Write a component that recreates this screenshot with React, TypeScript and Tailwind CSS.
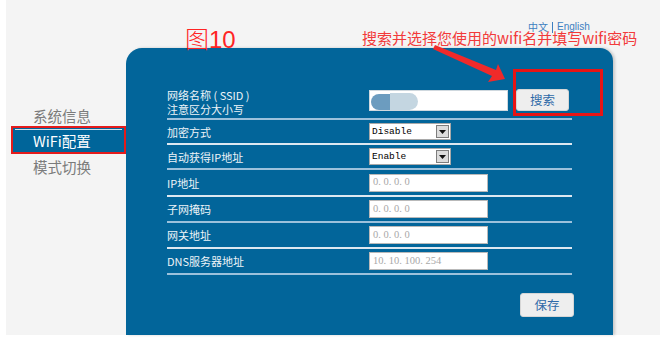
import React from "react";

const cjk = "font-['Noto_Sans_CJK_SC','Noto_Sans',sans-serif]";

type Row = {
  label: string[];
  kind: "ssid" | "select" | "text";
  value?: string;
  h: string;
  line: string;
};

const rows: Row[] = [
  { label: ["网络名称 ( SSID )", "注意区分大小写"], kind: "ssid", h: "h-[30px]", line: "bg-[#9cc1dc]" },
  { label: ["加密方式"], kind: "select", value: "Disable", h: "h-[23px]", line: "bg-[#dde8f1]" },
  { label: ["自动获得IP地址"], kind: "select", value: "Enable", h: "h-[23px]", line: "bg-[#9cc1dc]" },
  { label: ["IP地址"], kind: "text", value: "0. 0. 0. 0", h: "h-[25px]", line: "bg-[#dde8f1]" },
  { label: ["子网掩码"], kind: "text", value: "0. 0. 0. 0", h: "h-[24px]", line: "bg-[#9cc1dc]" },
  { label: ["网关地址"], kind: "text", value: "0. 0. 0. 0", h: "h-[24px]", line: "bg-[#dde8f1]" },
  { label: ["DNS服务器地址"], kind: "text", value: "10. 10. 100. 254", h: "h-[24px]", line: "bg-[#9cc1dc]" },
];

function SelectBox({ value }: { value: string }) {
  return (
    <div className="flex h-[17px] w-[82px] items-center justify-between border border-[#a9a9a9] bg-white pl-[2px] pr-[1px]">
      <span className="font-['Liberation_Mono',monospace] text-[9.5px] leading-none text-black">{value}</span>
      <div className="flex h-[13px] w-[13px] items-center justify-center border border-[#7d7d7d] bg-[#dcdcdc]">
        <svg width="7" height="4" viewBox="0 0 7 4">
          <polygon points="0,0 7,0 3.5,4" fill="#111" />
        </svg>
      </div>
    </div>
  );
}

function Field({ row }: { row: Row }) {
  if (row.kind === "ssid") {
    return (
      <div className="flex items-start pt-[2px]">
        <div className="relative h-[21px] w-[139px] overflow-hidden border border-[#cfd8de] bg-white">
          {/* blurred-out network name */}
          <div className="absolute left-[1px] top-[3px] h-[16px] w-[30px] rounded-l-full rounded-tr-[6px] bg-[#6c9cbf] blur-[0.7px]" />
          <div className="absolute left-[20px] top-[2px] h-[17px] w-[28px] rounded-r-[9px] bg-[#c4d6e1] blur-[0.7px]" />
        </div>
        <button className={`ml-[8px] mt-[-1px] h-[22px] w-[53px] rounded-[3px] border border-[#d6d6d6] bg-[#eeeeee] text-[12.5px] leading-none text-[#2f6aa8] ${cjk}`}>
          搜索
        </button>
      </div>
    );
  }
  if (row.kind === "select") return <SelectBox value={row.value!} />;
  return (
    <div className="flex h-[18px] w-[119px] items-center border border-[#b9b9b9] bg-white pl-[3px]">
      <span className="font-['Liberation_Serif',serif] text-[10.5px] leading-none text-[#a8a8a8]">{row.value}</span>
    </div>
  );
}

export default function App() {
  return (
    <div className={`relative h-[357px] w-[660px] overflow-hidden bg-white ${cjk}`}>
      <div className="ml-[6px] flex h-[335px] bg-[#f4f4f4]">
        {/* sidebar */}
        <div className="w-[120px] pt-[106px]">
          <div className="h-[20px] pl-[27px] text-[14.5px] leading-[20px] text-[#7b7b7b]">系统信息</div>
          <div className="ml-[5px] h-[28px] w-[115px] border-2 border-[#e41b1b] bg-[#00659a]">
            <div className="mx-[2px] mt-[1px] h-px bg-[#cfe0ec]" />
            <div className="pl-[20px] text-[14.5px] leading-[22px] text-white">WiFi配置</div>
          </div>
          <div className="h-[26px] pl-[27px] text-[14.5px] leading-[26px] text-[#7b7b7b]">模式切换</div>
        </div>

        {/* panel */}
        <div className="mt-[48px] w-[487px] rounded-tl-[16px] rounded-tr-[13px] bg-[#02659a] px-[41px] pt-[40px] shadow-[2px_0_3px_rgba(0,0,0,0.18)]">
          {rows.map((row, i) => (
            <div key={i}>
              <div className={`flex ${row.h} ${row.kind === "ssid" ? "items-start" : "items-center"}`}>
                <div className="w-[202px] text-[11px] leading-[14px] text-[#eef4f8]">
                  {row.label.map((l, j) => (
                    <div key={j}>{l}</div>
                  ))}
                </div>
                <Field row={row} />
              </div>
              <div className={`h-[2px] ${row.line}`} />
            </div>
          ))}
          <div className="mt-[18px] flex justify-end">
            <button className="mr-[-2px] h-[24px] w-[54px] rounded-[3px] border border-[#d6d6d6] bg-[#eeeeee] text-[12.5px] leading-none text-[#2f6aa8]">
              保存
            </button>
          </div>
        </div>
      </div>

      {/* annotations */}
      <div className="absolute left-[185px] top-[24px] text-[24px] leading-[28px] text-[#ff2424]">
        <span className="font-light">图</span>
        <span className="font-['Liberation_Sans',sans-serif]">10</span>
      </div>
      <div className="absolute left-[528px] top-[21px] flex items-center gap-[4px] text-[10px] leading-[12px] text-[#3d7fc1]">
        <span>中文</span>
        <span className="h-[11px] w-px bg-[#3d7fc1]" />
        <span className="font-['Liberation_Sans',sans-serif]">English</span>
      </div>
      <div className="absolute left-[362px] top-[28px] text-[15px] leading-[20px] text-[#f23a3a]">
        搜索并选择您使用的wifi名并填写wifi密码
      </div>
      <svg className="absolute left-0 top-0" width="660" height="357">
        <polygon points="435,45 496,70 498,64 505,79 488,82 492,76 433,49" fill="#f02a2a" />
      </svg>
      <div className="absolute left-[513px] top-[69px] h-[47px] w-[90px] border-[3px] border-[#e81414]" />
    </div>
  );
}
